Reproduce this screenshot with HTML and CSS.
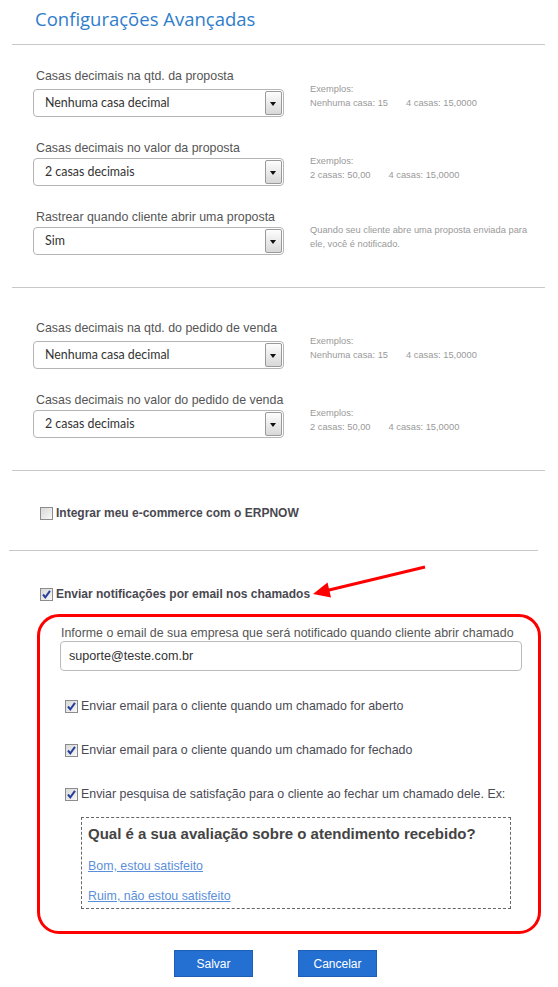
FILE: index.html
```html
<!DOCTYPE html>
<html lang="pt-BR">
<head>
  <title>Configurações Avançadas</title>
  <meta charset="UTF-8">
  <meta name="viewport" content="width=device-width, initial-scale=1">

  <link rel="stylesheet" href="styles.css">
</head>
<body>

  <div class="page">
    <h1 class="page-title">Configurações Avançadas</h1>
    <hr class="divider">

    <div class="group group-first">
      <div class="field-row">
        <div class="field">
          <div class="field-label">Casas decimais na qtd. da proposta</div>
          <div class="select"><span class="select-value">Nenhuma casa decimal</span><span class="select-arrow"></span></div>
        </div>
        <div class="hint">Exemplos:<br>Nenhuma casa: 15<span class="hint-gap"></span>4 casas: 15,0000</div>
      </div>
      <div class="field-row">
        <div class="field">
          <div class="field-label">Casas decimais no valor da proposta</div>
          <div class="select"><span class="select-value">2 casas decimais</span><span class="select-arrow"></span></div>
        </div>
        <div class="hint">Exemplos:<br>2 casas: 50,00<span class="hint-gap"></span>4 casas: 15,0000</div>
      </div>
      <div class="field-row">
        <div class="field">
          <div class="field-label">Rastrear quando cliente abrir uma proposta</div>
          <div class="select"><span class="select-value">Sim</span><span class="select-arrow"></span></div>
        </div>
        <div class="hint">Quando seu cliente abre uma proposta enviada para<br>ele, você é notificado.</div>
      </div>
    </div>

    <hr class="divider">

    <div class="group group-second">
      <div class="field-row">
        <div class="field">
          <div class="field-label">Casas decimais na qtd. do pedido de venda</div>
          <div class="select"><span class="select-value">Nenhuma casa decimal</span><span class="select-arrow"></span></div>
        </div>
        <div class="hint">Exemplos:<br>Nenhuma casa: 15<span class="hint-gap"></span>4 casas: 15,0000</div>
      </div>
      <div class="field-row">
        <div class="field">
          <div class="field-label">Casas decimais no valor do pedido de venda</div>
          <div class="select"><span class="select-value">2 casas decimais</span><span class="select-arrow"></span></div>
        </div>
        <div class="hint">Exemplos:<br>2 casas: 50,00<span class="hint-gap"></span>4 casas: 15,0000</div>
      </div>
    </div>

    <hr class="divider">

    <div class="group-check">
      <label class="check-row check-bold">
        <span class="check"></span>Integrar meu e-commerce com o ERPNOW
      </label>
    </div>

    <hr class="divider divider-short">

    <div class="group-notify">
      <label class="check-row check-bold">
        <span class="check checked"><svg width="11" height="11" viewBox="0 0 11 11"><path d="M2 5.5 L4.3 8.3 L9 1.8" fill="none" stroke="#2a3f9a" stroke-width="2"/></svg></span>Enviar notificações por email nos chamados
      </label>

      <div class="notify-box">
        <div class="field-label">Informe o email de sua empresa que será notificado quando cliente abrir chamado</div>
        <div class="text-input">suporte@teste.com.br</div>

        <label class="check-row check-inner">
          <span class="check checked"><svg width="11" height="11" viewBox="0 0 11 11"><path d="M2 5.5 L4.3 8.3 L9 1.8" fill="none" stroke="#2a3f9a" stroke-width="2"/></svg></span>Enviar email para o cliente quando um chamado for aberto
        </label>
        <label class="check-row check-inner">
          <span class="check checked"><svg width="11" height="11" viewBox="0 0 11 11"><path d="M2 5.5 L4.3 8.3 L9 1.8" fill="none" stroke="#2a3f9a" stroke-width="2"/></svg></span>Enviar email para o cliente quando um chamado for fechado
        </label>
        <label class="check-row check-inner">
          <span class="check checked"><svg width="11" height="11" viewBox="0 0 11 11"><path d="M2 5.5 L4.3 8.3 L9 1.8" fill="none" stroke="#2a3f9a" stroke-width="2"/></svg></span>Enviar pesquisa de satisfação para o cliente ao fechar um chamado dele. Ex:
        </label>

        <div class="survey">
          <h3>Qual é a sua avaliação sobre o atendimento recebido?</h3>
          <a href="#">Bom, estou satisfeito</a>
          <a href="#">Ruim, não estou satisfeito</a>
        </div>
      </div>
    </div>

    <div class="actions">
      <button class="btn">Salvar</button>
      <button class="btn">Cancelar</button>
    </div>

    <!-- red annotation arrow pointing at the notify checkbox -->
    <svg class="annotation" width="125" height="45" viewBox="0 0 125 45">
      <line x1="120" y1="7" x2="22" y2="30.5" stroke="#f00" stroke-width="3"/>
      <polygon points="8,34 26,37.5 22.5,22.5" fill="#f00"/>
    </svg>
  </div>

</body>
</html>
```

FILE: styles.css
```css
* {
  box-sizing: border-box;
}

body {
  margin: 0;
  background-color: #fff;
  font-family: "Liberation Sans", Arial, sans-serif;
  color: #555;
}

.page {
  position: relative;
  width: 558px;
  min-height: 987px;
}

.page-title {
  margin: 0;
  padding: 7px 0 0 35px;
  font-family: "Open Sans", sans-serif;
  font-weight: normal;
  font-size: 18.5px;
  line-height: 24px;
  color: #2f7dca;
}

.divider {
  margin: 0 13px 0 12px;
  border: 0;
  border-top: 1px solid #c8c8c8;
  height: 0;
}

.page-title + .divider {
  margin-top: 13px;
}

.divider-short {
  margin-left: 9px;
  margin-right: 20px;
}

.group {
  padding: 23px 0 9px 33px;
}

.group-second {
  padding-top: 32px;
}

.field-row {
  display: flex;
  align-items: flex-start;
  margin-bottom: 23px;
}

.field {
  width: 251px;
}

.field-label {
  padding-left: 3px;
  margin-bottom: 2px;
  font-size: 12.4px;
  line-height: 16px;
  color: #555;
  white-space: nowrap;
}

.field-row:first-child .field-label {
  margin-bottom: 5px;
}

.select {
  display: flex;
  align-items: stretch;
  height: 28px;
  border: 1px solid #b5b5b5;
  border-radius: 4px;
  background-color: #fff;
}

.select-value {
  flex: 1;
  padding-left: 11px;
  font-family: Lato, "Open Sans", sans-serif;
  font-size: 12.4px;
  line-height: 26px;
  color: #333;
}

.select-arrow {
  position: relative;
  width: 17px;
  margin: 1px 1px 1px 0;
  border: 1px solid #9a9a9a;
  border-radius: 2px;
  background: linear-gradient(#fdfdfd, #d8d8d8);
}

.select-arrow::after {
  content: "";
  position: absolute;
  left: 4px;
  top: 10px;
  border-left: 3.5px solid transparent;
  border-right: 3.5px solid transparent;
  border-top: 4px solid #111;
}

.hint {
  margin-left: 26px;
  margin-top: 14px;
  font-size: 9.3px;
  line-height: 14px;
  color: #999;
  white-space: nowrap;
}

.hint-gap {
  display: inline-block;
  width: 18px;
}

.group-check {
  padding: 34px 0 29px 40px;
}

.group-notify {
  padding: 35px 0 0 40px;
}

.check-row {
  display: flex;
  align-items: center;
  font-size: 12px;
  line-height: 16px;
  color: #484850;
  cursor: pointer;
}

.check-bold {
  font-weight: bold;
}

.check {
  display: inline-flex;
  align-items: center;
  justify-content: center;
  width: 13px;
  height: 13px;
  margin-right: 3px;
  border: 1px solid #8c8c8c;
  background: linear-gradient(135deg, #d8d8d8, #f8f8f8);
}

.notify-box {
  width: 504px;
  margin: 12px 0 0 -3px;
  padding: 9px 16px 22px 20px;
  border: 3px solid #f00;
  border-radius: 22px;
}

.notify-box .field-label {
  padding-left: 1px;
  margin-bottom: 0;
  line-height: 15px;
}

.text-input {
  height: 30px;
  padding-left: 8px;
  border: 1px solid #bbb;
  border-radius: 4px;
  font-size: 12.6px;
  line-height: 28px;
  color: #333;
}

.check-inner {
  margin: 27px 0 0 5px;
  font-size: 12.4px;
  color: #4a4a55;
  white-space: nowrap;
}

.check-inner + .check-inner {
  margin-top: 28px;
}

.survey {
  width: 430px;
  margin: 15px 0 0 21px;
  padding: 6px 6px 4px 6px;
  border: 1px dashed #666;
}

.survey h3 {
  margin: 0 0 14px 0;
  font-size: 15px;
  line-height: 20px;
  color: #444;
}

.survey a {
  display: block;
  font-size: 12.4px;
  line-height: 16px;
  color: #5b8fd9;
}

.survey a + a {
  margin-top: 14px;
}

.actions {
  display: flex;
  gap: 45px;
  margin-top: 16px;
  padding-left: 174px;
}

.btn {
  width: 79px;
  height: 27px;
  border: 1px solid #1c5fb4;
  background-color: #2370d2;
  color: #fff;
  font-family: "Liberation Sans", Arial, sans-serif;
  font-size: 12px;
  cursor: pointer;
}

.annotation {
  position: absolute;
  left: 305px;
  top: 560px;
}
```
